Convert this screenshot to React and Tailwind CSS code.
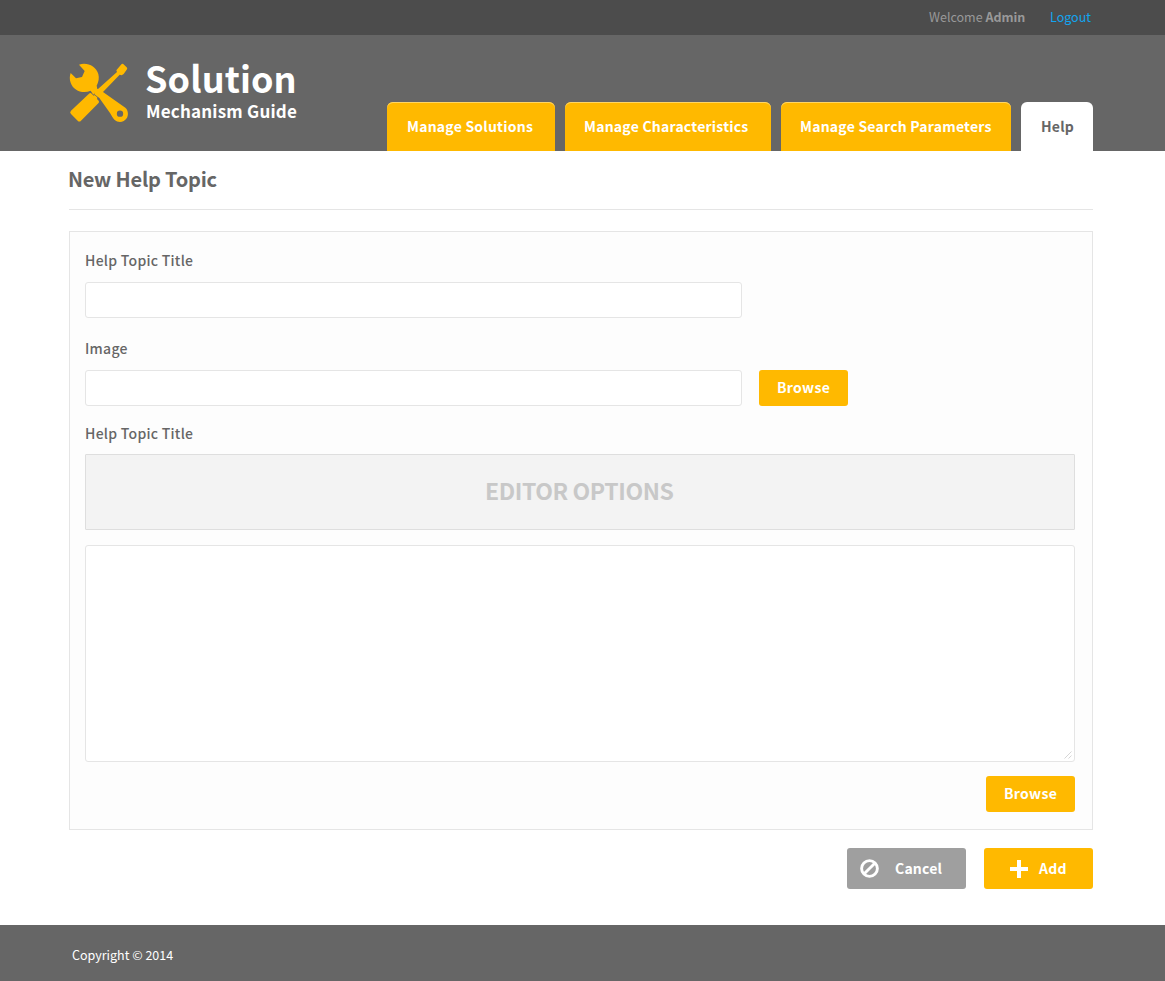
import React from "react";

function Logo() {
  return (
    <svg className="h-[70px] w-[70px] shrink-0" viewBox="0 0 210 210" fill="#ffb900">
      <path d="M45 20 C68 11 96 24 103 48 C106 60 104 72 98 83 L100 93 L88 110 L80 98 C56 108 28 98 20 74 C16 64 17 54 20 45 L36 61 L54 57 L62 39 Z" />
      <path d="M75 107 Q79 103 83 107 L89 113 L94 110 L101 117 L99 123 L104 128 Q107 132 103 136 L51 188 Q46 193 41 188 L21 168 Q16 163 21 158 Z" />
      <path d="M88 94 L102 93 L159 42 L157 37 L173 18 Q177 16 180 20 L188 28 Q191 31 189 34 L179 48 L173 52 L167 50 L117 102 L184 149 C193 157 194 172 188 181 C180 194 162 195 152 186 C147 181 142 172 138 165 L106 120 L92 110 Z M168 157.500 A9.500 9.500 0 1 0 168 176.500 A9.500 9.500 0 1 0 168 157.500 Z" fillRule="evenodd" />
      <path d="M92 110 L107 124" stroke="#666" strokeWidth="2.500" />
    </svg>
  );
}

function Tab({ children, className }) {
  return (
    <a
      href="#"
      className={`flex h-[49px] items-center rounded-t-[6px] pb-[2px] text-[14px] leading-[20px] font-bold tracking-[0.22px] whitespace-nowrap ${className}`}
    >
      {children}
    </a>
  );
}

const yellowTab = "bg-[#ffb900] text-white shadow-[inset_0_1px_0_#ffd666]";

function Browse() {
  return (
    <button className="flex h-9 w-[89px] shrink-0 items-center rounded-[3px] bg-[#ffb900] pb-[2px] pl-[18px] text-[14px] leading-[20px] font-bold tracking-[0.3px] text-white">
      Browse
    </button>
  );
}

function Label({ children }) {
  return (
    <label className="block h-5 text-[14px] leading-[20px] font-medium tracking-[0.27px] whitespace-nowrap text-[#666]">
      {children}
    </label>
  );
}

export default function App() {
  return (
    <div className="flex h-[981px] w-[1165px] flex-col overflow-hidden bg-white font-['Noto_Sans_CJK_SC','Noto_Sans',sans-serif]">
      <div className="flex h-[35px] shrink-0 bg-[#4c4c4c] pt-[7px] pl-[929px] text-[12.5px] leading-[20px] whitespace-nowrap text-[#999]">
        <span className="w-[121px]">
          Welcome <b>Admin</b>
        </span>
        <a href="#" className="text-[#12a5f0]">Logout</a>
      </div>

      <header className="flex h-[116px] shrink-0 bg-[#666] pl-16">
        <div className="flex w-[323px] shrink-0 pt-[23px]">
          <Logo />
          <div className="-mt-[2px] pl-[11px] font-bold whitespace-nowrap text-white">
            <div className="h-[45px] text-[36px] leading-[42px] tracking-[0.1px]">Solution</div>
            <div className="h-[20px] pl-px text-[17px] leading-[20px] tracking-[0.2px]">Mechanism Guide</div>
          </div>
        </div>
        <nav className="flex items-end gap-[10px]">
          <Tab className={`w-[168px] pl-5 ${yellowTab}`}>Manage Solutions</Tab>
          <Tab className={`w-[206px] pl-[19px] ${yellowTab}`}>Manage Characteristics</Tab>
          <Tab className={`w-[230px] pl-[19px] ${yellowTab}`}>Manage Search Parameters</Tab>
          <Tab className="w-[72px] bg-white pl-5 text-[#666]">Help</Tab>
        </nav>
      </header>

      <main className="mr-[72px] ml-[69px] h-[774px] shrink-0">
        <h1 className="h-[59px] border-b border-[#e5e5e5] pt-[14px] text-[20px] leading-[28px] font-bold tracking-[-0.2px] whitespace-nowrap text-[#666]">
          <span className="-ml-px">New Help Topic</span>
        </h1>
        <section className="mt-[21px] h-[599px] border border-[#e5e5e5] bg-[#fdfdfd] pt-[18px] pr-[17px] pl-[15px]">
          <Label>Help Topic Title</Label>
          <input className="mt-3 block h-9 w-[657px] rounded-[3px] border border-[#e5e5e5] bg-white" />
          <div className="mt-5">
            <Label>Image</Label>
          </div>
          <div className="mt-3 flex gap-[17px]">
            <input className="block h-9 w-[657px] rounded-[3px] border border-[#e5e5e5] bg-white" />
            <Browse />
          </div>
          <div className="mt-[17px]">
            <Label>Help Topic Title</Label>
          </div>
          <div className="mt-[11px] flex h-[76px] items-center rounded-[1px] border border-[#dedede] bg-[#f3f3f3] pb-[4px] pl-[399px] text-[23px] leading-[28px] font-bold tracking-[-0.42px] whitespace-nowrap text-[#c8c8c8]">
            EDITOR OPTIONS
          </div>
          <div className="mt-[15px] flex h-[217px] items-end justify-end rounded-[3px] border border-[#e5e5e5] bg-white p-[2px]">
            <svg className="h-2 w-2" viewBox="0 0 8 8" stroke="#c4c4c4" strokeWidth="0.7">
              <path d="M0.5 7.5 L7.5 0.5 M4.5 7.5 L7.5 4.5" />
            </svg>
          </div>
          <div className="mt-[14px] flex justify-end">
            <Browse />
          </div>
        </section>
        <div className="mt-[18px] flex justify-end gap-[18px] text-[14px] leading-[20px] font-bold text-white">
          <button className="flex h-[41px] w-[119px] items-center gap-4 rounded-[3px] bg-[#9f9f9f] pl-[13px]">
            <svg className="h-[19px] w-[19px]" viewBox="0 0 19 19" fill="none" stroke="#fff" strokeWidth="2.9">
              <circle cx="9.5" cy="9.5" r="7.9" />
              <path d="M4.2 14.8 L14.8 4.2" />
            </svg>
            <span className="pb-[2px] tracking-[0.2px]">Cancel</span>
          </button>
          <button className="flex h-[41px] w-[109px] items-center gap-[11px] rounded-[3px] bg-[#ffb900] pl-[26px]">
            <svg className="h-[18px] w-[18px]" viewBox="0 0 18 18" fill="#fff">
              <path d="M7 0h4v7h7v4h-7v7H7v-7H0V7h7z" />
            </svg>
            <span className="pb-[2px] tracking-[0.2px]">Add</span>
          </button>
        </div>
      </main>

      <footer className="h-[56px] shrink-0 bg-[#666] pt-5 pl-[72px] text-[12.5px] leading-[20px] text-white">
        Copyright © 2014
      </footer>
    </div>
  );
}
